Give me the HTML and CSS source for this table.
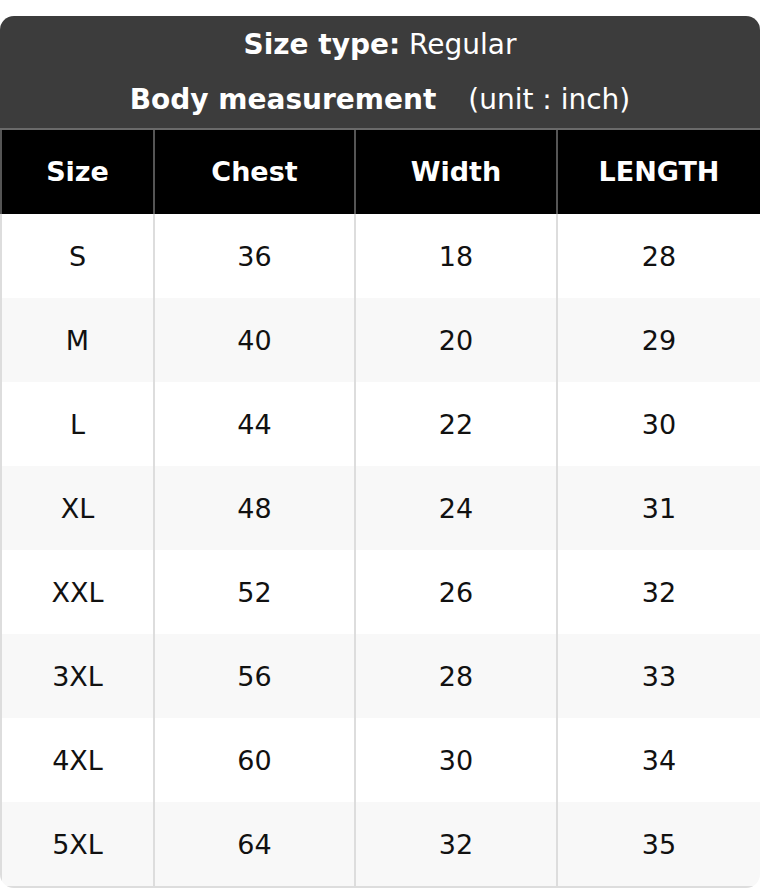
FILE: index.html
```html
<!DOCTYPE html>
<html>
<head>
<meta charset="utf-8">
<link rel="stylesheet" href="styles.css">
</head>
<body>
<div class="card">
  <div class="banner">
    <div class="line"><b>Size type:</b> Regular</div>
    <div class="line"><b>Body measurement</b><span class="unit">(unit : inch)</span></div>
  </div>
  <table class="chart">
    <colgroup>
      <col class="c1"><col class="c2"><col class="c3"><col class="c4">
    </colgroup>
    <thead>
      <tr><th>Size</th><th>Chest</th><th>Width</th><th>LENGTH</th></tr>
    </thead>
    <tbody>
      <tr><td>S</td><td>36</td><td>18</td><td>28</td></tr>
      <tr><td>M</td><td>40</td><td>20</td><td>29</td></tr>
      <tr><td>L</td><td>44</td><td>22</td><td>30</td></tr>
      <tr><td>XL</td><td>48</td><td>24</td><td>31</td></tr>
      <tr><td>XXL</td><td>52</td><td>26</td><td>32</td></tr>
      <tr><td>3XL</td><td>56</td><td>28</td><td>33</td></tr>
      <tr><td>4XL</td><td>60</td><td>30</td><td>34</td></tr>
      <tr><td>5XL</td><td>64</td><td>32</td><td>35</td></tr>
    </tbody>
  </table>
</div>
</body>
</html>
```
FILE: styles.css
```css
html, body {
  margin: 0;
  padding: 0;
  background: #fff;
}
body {
  padding-top: 16px;
  font-family: "DejaVu Sans", sans-serif;
  color: #111;
}
.card {
  width: 760px;
  border-radius: 14px;
  overflow: hidden;
  background: #fff;
  box-sizing: border-box;
}
.banner {
  background: #3c3c3c;
  color: #fff;
  text-align: center;
  padding: 9px 0 8px;
  display: flex;
  flex-direction: column;
  gap: 15px;
  border-bottom: 2px solid #6a6a6a;
}
.line {
  font-size: 28px;
  line-height: 40px;
}
.line b {
  font-weight: bold;
}
.unit {
  margin-left: 32px;
}
.chart {
  width: 760px;
  border-collapse: collapse;
  table-layout: fixed;
}
.c1 { width: 153px; }
.c2 { width: 201px; }
.c3 { width: 202px; }
.c4 { width: 204px; }
.chart th {
  background: #000;
  color: #fff;
  font-weight: bold;
  font-size: 27px;
  height: 84px;
  padding: 0 0 2px;
  box-sizing: border-box;
  border-left: 2px solid #555;
  border-right: 2px solid #555;
}
.chart td {
  font-size: 27px;
  height: 84px;
  padding: 0;
  text-align: center;
  border-left: 2px solid #ddd;
  border-right: 2px solid #ddd;
}
.chart tbody tr:nth-child(even) td {
  background: #f8f8f8;
}
.chart tbody tr:last-child td {
  border-bottom: 2px solid #ddd;
}
```
